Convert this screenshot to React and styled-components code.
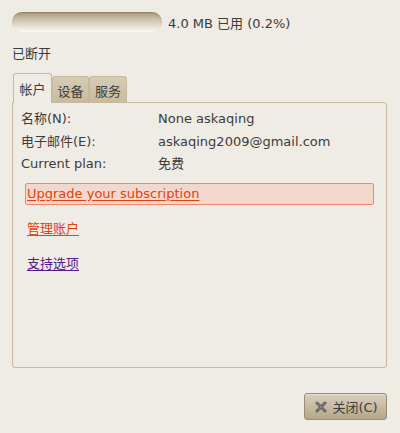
import React, { useState } from "react";
import styled, { createGlobalStyle } from "styled-components";

const GlobalStyle = createGlobalStyle`
  html, body {
    margin: 0;
    padding: 0;
    background: #efebe5;
  }
  body {
    font-family: "DejaVu Sans", "Noto Sans CJK SC", sans-serif;
    font-size: 13px;
    color: #3c3c3c;
  }
`;

const Window = styled.div`
  width: 400px;
  height: 433px;
  box-sizing: border-box;
  padding: 12px 13px 13px 12px;
  display: flex;
  flex-direction: column;
`;

const UsageRow = styled.div`
  display: flex;
  align-items: center;
  gap: 6px;
  height: 20px;
`;

const Meter = styled.div`
  width: 150px;
  height: 20px;
  border-radius: 10px;
  background: linear-gradient(to bottom, #a8967a 0%, #cdbfa8 35%, #e9e2d6 75%, #fbfaf7 100%);
  box-shadow: inset 0 1px 1px rgba(110, 90, 60, 0.35);
`;

const Status = styled.div`
  margin-top: 13px;
  height: 18px;
  line-height: 18px;
`;

const TabBar = styled.div`
  display: flex;
  align-items: flex-end;
  margin-top: 10px;
  padding-left: 1px;
  height: 29px;
`;

const Tab = styled.button`
  font: inherit;
  color: #3c3c3c;
  margin: 0;
  padding: 0;
  border: 1px solid #c6b99d;
  border-bottom: none;
  border-radius: 3px 3px 0 0;
  height: ${(p) => (p.$active ? "30px" : "26px")};
  width: ${(p) => p.$w}px;
  background: ${(p) =>
    p.$active
      ? "#efebe5"
      : "linear-gradient(to bottom, #d6cbb5, #c8bb9f)"};
  position: relative;
  z-index: ${(p) => (p.$active ? 2 : 1)};
  margin-bottom: ${(p) => (p.$active ? "-1px" : "0")};
  cursor: pointer;
  padding-top: ${(p) => (p.$active ? "0" : "1px")};
`;

const Panel = styled.div`
  height: 266px;
  box-sizing: border-box;
  border: 1px solid #c6b99d;
  border-radius: 0 3px 3px 3px;
  padding: 5px 12px 0 8px;
  display: flex;
  flex-direction: column;
`;

const InfoGrid = styled.div`
  display: grid;
  grid-template-columns: 137px 1fr;
  row-gap: 0;
`;

const Cell = styled.div`
  height: 22.5px;
  line-height: 22px;
  white-space: nowrap;
`;

const Links = styled.div`
  display: flex;
  flex-direction: column;
  margin-top: 7px;
  padding-left: 4px;
`;

const Link = styled.a`
  display: block;
  box-sizing: border-box;
  height: ${(p) => (p.$focus ? "22px" : "20px")};
  line-height: 20px;
  padding-left: 1px;
  margin-bottom: ${(p) => p.$gap}px;
  color: ${(p) => (p.$visited ? "#551a8b" : "#e0430c")};
  text-decoration: underline;
  text-underline-offset: 2px;
  border: 1px solid ${(p) => (p.$focus ? "#f3876c" : "transparent")};
  border-radius: 2px;
  background: ${(p) => (p.$focus ? "#f3d7cc" : "transparent")};
  align-self: ${(p) => (p.$focus ? "stretch" : "flex-start")};
  cursor: pointer;
`;

const Footer = styled.div`
  margin-top: auto;
  display: flex;
  justify-content: flex-end;
`;

const Button = styled.button`
  font: inherit;
  color: #3c3c3c;
  width: 83px;
  height: 27px;
  margin: 0;
  padding: 0 0 0 2px;
  display: flex;
  align-items: center;
  justify-content: center;
  gap: 5px;
  border: 1px solid #9a8c74;
  border-radius: 3px;
  background: linear-gradient(to bottom, #d9cfbd 0%, #c6b9a0 55%, #b5a68a 100%);
  box-shadow: inset 0 1px 0 rgba(255, 255, 255, 0.35);
  cursor: pointer;
`;

const CloseIcon = () => (
  <svg width="12" height="12" viewBox="0 0 12 12">
    <path
      d="M2 2 L10 10 M10 2 L2 10"
      stroke="#5f5f5f"
      strokeWidth="3"
      strokeLinecap="round"
    />
    <path
      d="M2 2 L10 10 M10 2 L2 10"
      stroke="#8a8a8a"
      strokeWidth="1"
      strokeLinecap="round"
    />
  </svg>
);

const tabs = [
  { id: "account", label: "帐户", w: 39 },
  { id: "devices", label: "设备", w: 37 },
  { id: "services", label: "服务", w: 38 },
];

const info = [
  ["名称(N):", "None askaqing"],
  ["电子邮件(E):", "askaqing2009@gmail.com"],
  ["Current plan:", "免费"],
];

export default function App() {
  const [active, setActive] = useState("account");
  return (
    <>
      <GlobalStyle />
      <Window>
        <UsageRow>
          <Meter />
          <span>4.0 MB 已用 (0.2%)</span>
        </UsageRow>
        <Status>已断开</Status>
        <TabBar>
          {tabs.map((t) => (
            <Tab
              key={t.id}
              $w={t.w}
              $active={active === t.id}
              onClick={() => setActive(t.id)}
            >
              {t.label}
            </Tab>
          ))}
        </TabBar>
        <Panel>
          <InfoGrid>
            {info.map(([k, v]) => (
              <React.Fragment key={k}>
                <Cell>{k}</Cell>
                <Cell>{v}</Cell>
              </React.Fragment>
            ))}
          </InfoGrid>
          <Links>
            <Link $focus $gap={13}>Upgrade your subscription</Link>
            <Link $gap={15}>管理账户</Link>
            <Link $visited $gap={0}>支持选项</Link>
          </Links>
        </Panel>
        <Footer>
          <Button>
            <CloseIcon />
            关闭(C)
          </Button>
        </Footer>
      </Window>
    </>
  );
}
